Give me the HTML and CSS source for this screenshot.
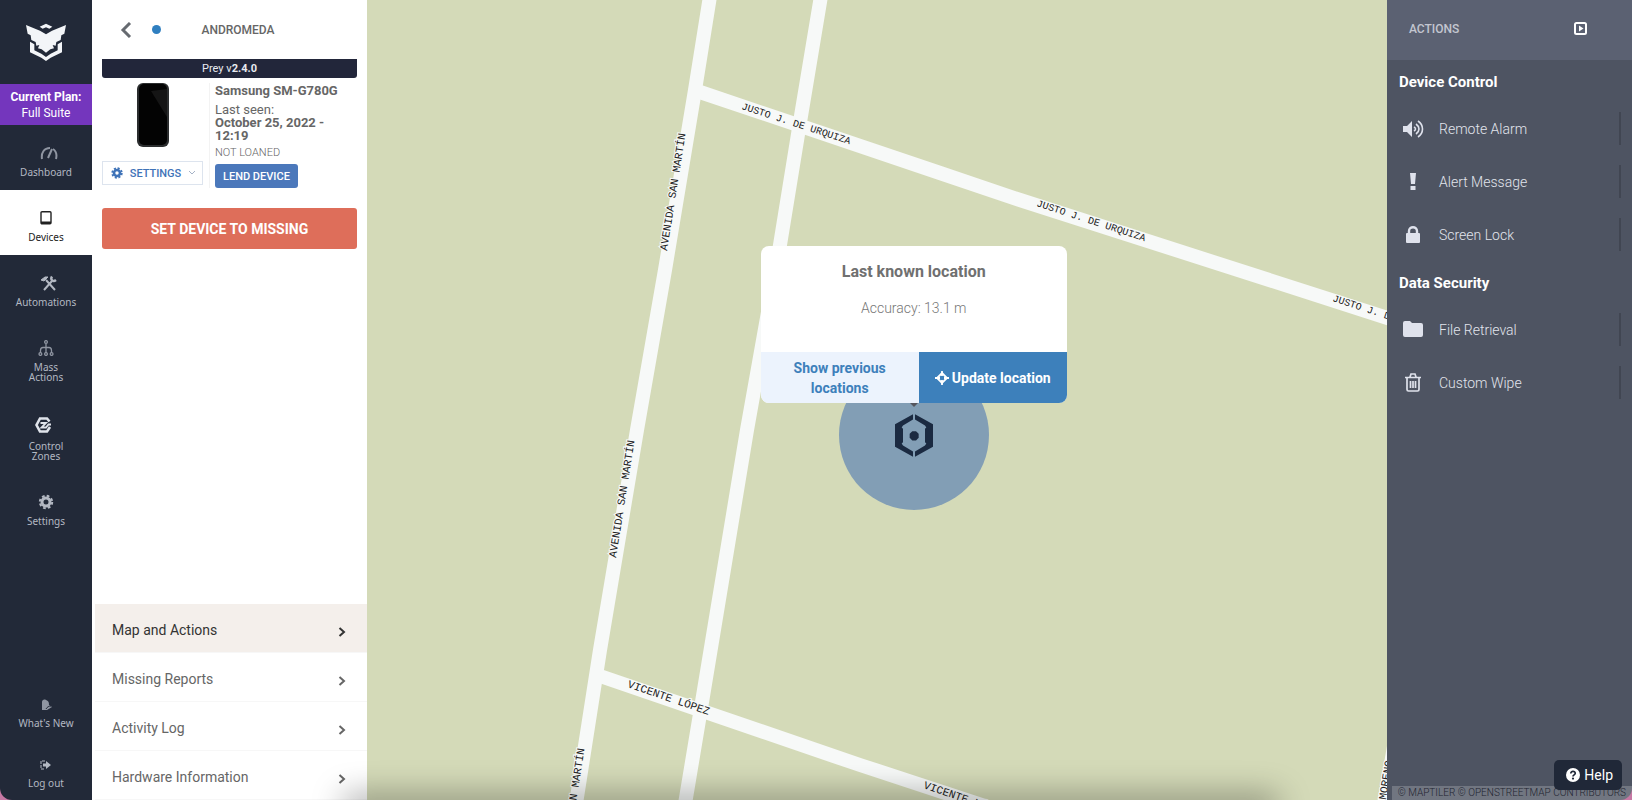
FILE: index.html
```html
<!DOCTYPE html>
<html lang="en">
<head>
  <meta charset="UTF-8">
  <meta name="viewport" content="width=device-width, initial-scale=1">
  <title>Andromeda - Prey</title>
  <link rel="stylesheet" href="styles.css">
</head>
<body>
  <div class="app">

    <!-- Main navigation -->
    <nav class="sidebar">
      <a href="#" class="logo" aria-label="Prey">
        <svg viewBox="0 0 120 114" width="40" height="38" fill="#f3f5f8">
          <path d="M60 2l19 9-9 6-10-4-10 4-9-6z"/>
          <path d="M0 6l42 17 18 11 18-11 42-17-5 26-9 5-2 14-13 6-2 11-9-2 4 10-11 3-13 10-13-10-11-3 4-10-9 2-2-11-13-6-2-14-9-5z"/>
          <path d="M12 56l13 8v18l21 10 14 10 14-10 21-10V64l13-8v32l-34 16-14 10-14-10-34-16z"/>
        </svg>
      </a>
      <div class="plan"><strong>Current Plan:</strong><span>Full Suite</span></div>

      <a href="#" class="item">
        <svg class="shift" viewBox="0 0 18 16" width="18" height="16" fill="none" stroke="#8f95a1" stroke-width="2">
          <path d="M2 14C1 8 4 3 10 3M13 4c3 2 4 6 3 10"/>
          <path d="M8 13l4-9"/>
        </svg>
        <span>Dashboard</span>
      </a>
      <a href="#" class="item active">
        <svg viewBox="0 0 16 16" width="16" height="16" fill="none" stroke="currentColor" stroke-width="1.4">
          <rect x="3" y="1.700" width="10" height="12" rx="1"/>
          <path d="M3 12.500h10" stroke-width="2"/>
        </svg>
        <span>Devices</span>
      </a>
      <a href="#" class="item">
        <svg class="shift" viewBox="0 0 18 16" width="18" height="16" fill="none" stroke="currentColor" stroke-width="2">
          <path d="M4 15l8-9M6 5l9 10"/>
          <path d="M1 5l4-3h3L4 6z" fill="currentColor" stroke-width="1"/>
          <path d="M12 1.500c-2 3 1 6 4 3.500" stroke-width="2.400"/>
        </svg>
        <span>Automations</span>
      </a>
      <a href="#" class="item">
        <svg viewBox="0 0 16 16" width="16" height="16" fill="none" stroke="#8f95a1" stroke-width="1.300">
          <circle cx="8" cy="2" r="1.400"/>
          <path d="M8 3.500V13M2.500 13v-2.500c0-2 1-3 2.500-3h6c1.500 0 2.500 1 2.500 3V13"/>
          <circle cx="2.400" cy="14" r="1.400"/><circle cx="8" cy="14" r="1.400"/><circle cx="13.600" cy="14" r="1.400"/>
        </svg>
        <span>Mass<br>Actions</span>
      </a>
      <a href="#" class="item">
        <svg class="zones" viewBox="0 0 20 20" width="20" height="20" fill="none" stroke="#dfe3ea" stroke-width="2.600">
          <path d="M15.500 6.500L13 3.500H6L2.500 10 6 16.500h7l3-4.500"/>
          <path d="M6.500 8h5.500L7.500 12.500H12l2.500-3H17" stroke-width="1.800"/>
        </svg>
        <span>Control<br>Zones</span>
      </a>
      <a href="#" class="item">
        <svg viewBox="0 0 16 16" width="16" height="16" fill="none" stroke="currentColor">
          <circle cx="8" cy="8" r="4" stroke-width="3"/>
          <circle cx="8" cy="8" r="6.200" stroke-width="2" stroke-dasharray="2.700 2.170"/>
        </svg>
        <span>Settings</span>
      </a>

      <div class="sidebar-bottom">
        <a href="#" class="item">
          <svg viewBox="0 0 16 16" width="16" height="16" fill="#8f95a1">
            <path d="M4 13V5c0-2 2-3 4-2 3 1 3 3 3 5l3 2-5 3z"/>
            <path d="M8 12c1-2 3-3 5-3" fill="none" stroke="#222938"/>
          </svg>
          <span>What's New</span>
        </a>
        <a href="#" class="item">
          <svg viewBox="0 0 16 16" width="16" height="16" fill="currentColor">
            <path d="M7 4H3v8h4" fill="none" stroke="currentColor" stroke-dasharray="3 1"/>
            <path d="M5 6.500h3V4l5 4-5 4V9.500H5z"/>
          </svg>
          <span>Log out</span>
        </a>
      </div>
    </nav>

    <!-- Selected device -->
    <section class="device">
      <header class="device-header">
        <button type="button" class="back" aria-label="Back">
          <svg viewBox="0 0 12 16" width="12" height="16" fill="none" stroke="#666a70" stroke-width="3"><path d="M10 1L3 8l7 7"/></svg>
        </button>
        <span class="status"></span>
        <h1>ANDROMEDA</h1>
      </header>

      <div class="device-body">
        <div class="version">Prey v<strong>2.4.0</strong></div>
        <div class="summary">
          <div class="picture">
            <svg viewBox="0 0 32 64" width="32" height="64">
              <rect x="0" y="0" width="32" height="64" rx="6" fill="#2b2d2e"/>
              <rect x="2" y="1" width="28" height="61" rx="5" fill="#030303"/>
              <path d="M30 6v28L14 8z" fill="#151515"/>
            </svg>
            <button type="button" class="settings">
              <svg viewBox="0 0 16 16" width="12" height="12" fill="none" stroke="currentColor">
                <circle cx="8" cy="8" r="4" stroke-width="3.400"/>
                <circle cx="8" cy="8" r="6.400" stroke-width="2.400" stroke-dasharray="2.800 2.230"/>
              </svg>
              <span>SETTINGS</span>
              <svg viewBox="0 0 8 6" width="8" height="6" fill="none" stroke="#a5b2c6"><path d="M1 1l3 3 3-3"/></svg>
            </button>
          </div>
          <div class="info">
            <h2>Samsung SM-G780G</h2>
            <p>Last seen:<br><strong>October 25, 2022 - 12:19</strong></p>
            <p class="loan">NOT LOANED</p>
            <button type="button" class="lend">LEND DEVICE</button>
          </div>
        </div>
        <button type="button" class="missing">SET DEVICE TO MISSING</button>
      </div>

      <ul class="menu">
        <li><a href="#" class="current">Map and Actions <svg viewBox="0 0 8 12" width="8" height="12"><path d="M1.500 2L6 6l-4.500 4"/></svg></a></li>
        <li><a href="#">Missing Reports <svg viewBox="0 0 8 12" width="8" height="12"><path d="M1.500 2L6 6l-4.500 4"/></svg></a></li>
        <li><a href="#">Activity Log <svg viewBox="0 0 8 12" width="8" height="12"><path d="M1.500 2L6 6l-4.500 4"/></svg></a></li>
        <li><a href="#">Hardware Information <svg viewBox="0 0 8 12" width="8" height="12"><path d="M1.500 2L6 6l-4.500 4"/></svg></a></li>
      </ul>
    </section>

    <!-- Map -->
    <main class="map">
      <svg class="streets" viewBox="367 0 1020 800" preserveAspectRatio="xMidYMid slice">
        <g class="roads">
          <path d="M711-10L695 90 665 270 637 430 600 650 575 810"/>
          <path d="M822-10L800 122 780 245 747 430 704 690 684 810"/>
          <path d="M697 91L940 173 1020 200 1400 322"/>
          <path d="M600 676L860 765 1000 811"/>
          <path d="M1396 735L1383 810"/>
        </g>
        <g class="names">
          <text transform="translate(741 109) rotate(18)">JUSTO J. DE URQUIZA</text>
          <text transform="translate(1036 206) rotate(18)">JUSTO J. DE URQUIZA</text>
          <text transform="translate(1332 301) rotate(18)">JUSTO J. DE URQUIZA</text>
          <text class="long" transform="translate(667 251) rotate(-81)">AVENIDA SAN MARTÍN</text>
          <text class="long" transform="translate(616 558) rotate(-81)">AVENIDA SAN MARTÍN</text>
          <text class="long" transform="translate(566 866) rotate(-81)">AVENIDA SAN MARTÍN</text>
          <text class="long" transform="translate(627 687) rotate(19)">VICENTE LÓPEZ</text>
          <text class="long" transform="translate(923 788) rotate(19)">VICENTE LÓPEZ</text>
          <text class="long" transform="translate(1386 800) rotate(-81)">MORENO</text>
        </g>
      </svg>

      <div class="location">
        <svg class="marker" viewBox="0 0 114 128" width="38" height="43" fill="#1b2a41">
          <path d="M54 0L0 30v68l54 30v-16l-30-18-4-6 4-4V44l-4-4 4-6 30-18z"/>
          <path d="M60 0l54 30v68l-54 30v-16l30-18 4-6-4-4V44l4-4-4-6-30-18z"/>
          <path d="M52 51h11l8 8v12l-8 8H52l-8-8V59z"/>
        </svg>
        <div class="popup">
          <h2>Last known location</h2>
          <p>Accuracy: 13.1 m</p>
          <div class="popup-buttons">
            <button type="button" class="previous">Show previous locations</button>
            <button type="button" class="update">
              <svg viewBox="0 0 14 14" width="14" height="14" fill="none" stroke="currentColor" stroke-width="1.800">
                <path d="M7 2l5 5-5 5-5-5z"/>
                <path d="M7 0v5M7 9v5M0 7h5M9 7h5"/>
              </svg>
              Update location
            </button>
          </div>
        </div>
      </div>
    </main>

    <!-- Actions -->
    <aside class="actions">
      <header class="actions-header">
        <h2>ACTIONS</h2>
        <button type="button" aria-label="Hide actions">
          <svg viewBox="0 0 13 13" width="13" height="13" fill="none" stroke="#fff" stroke-width="2">
            <rect x="1" y="1" width="11" height="11" rx="1.500"/>
            <path d="M5 3.500l4.500 3L5 9.500z" fill="#fff" stroke="none"/>
          </svg>
        </button>
      </header>
      <h3>Device Control</h3>
      <ul>
        <li><button type="button">
          <svg viewBox="0 0 22 20" width="22" height="20" fill="#dfe2ec">
            <path d="M1 7h4l5-5v16l-5-5H1z"/>
            <path d="M12 8c2 1 2 3 0 4M14 5c4 3 4 7 0 10M16 2c6 4 6 12 0 16" fill="none" stroke="#dfe2ec" stroke-width="1.600"/>
          </svg>
          Remote Alarm</button></li>
        <li><button type="button">
          <svg viewBox="0 0 22 20" width="22" height="20" fill="#dfe2ec"><path d="M8 1h6l-1 11H9zM8.500 14h5v4h-5z"/></svg>
          Alert Message</button></li>
        <li><button type="button">
          <svg viewBox="0 0 22 20" width="22" height="20" fill="#dfe2ec">
            <rect x="4" y="8" width="14" height="10" rx="1"/>
            <path d="M7 9V6c0-5 8-5 8 0v3" fill="none" stroke="#dfe2ec" stroke-width="2.400"/>
          </svg>
          Screen Lock</button></li>
      </ul>
      <h3>Data Security</h3>
      <ul>
        <li><button type="button">
          <svg viewBox="0 0 22 20" width="22" height="20" fill="#dfe2ec"><path d="M3 1h5l2 2h9q2 0 2 2v10q0 2-2 2H3q-2 0-2-2V3q0-2 2-2z"/></svg>
          File Retrieval</button></li>
        <li><button type="button">
          <svg viewBox="0 0 22 20" width="22" height="20" fill="none" stroke="#dfe2ec" stroke-width="1.700">
            <path d="M3 4.500h16M5 5v11.500q0 1.500 1.500 1.500h9q1.500 0 1.500-1.500V5M8 4l1-3h4l1 3M8.500 8v7M11 8v7M13.500 8v7"/>
          </svg>
          Custom Wipe</button></li>
      </ul>
    </aside>

    <div class="dock-shadow"></div>
    <div class="attribution"><a href="#">© MAPTILER</a> <a href="#">© OPENSTREETMAP CONTRIBUTORS</a></div>
    <button type="button" class="help">
      <svg viewBox="0 0 14 14" width="14" height="14">
        <circle cx="7" cy="7" r="7" fill="#fff"/>
        <path d="M4.800 5.500c0-3 4.600-2.600 4.400 0C9.100 7 7 6.800 7 8.500" fill="none" stroke="#202838" stroke-width="1.700"/>
        <circle cx="7" cy="10.600" r="1.100" fill="#202838"/>
      </svg>
      Help
    </button>
  </div>
</body>
</html>
```
FILE: styles.css
```css
* {
  box-sizing: border-box;
}

body {
  margin: 0;
  background: #c678a4;
  font-family: Roboto, "Liberation Sans", sans-serif;
  color: #666;
}

h1, h2, h3, p, ul {
  margin: 0;
  padding: 0;
}

ul {
  list-style: none;
}

a {
  color: inherit;
  text-decoration: none;
}

button {
  font-family: inherit;
  border: 0;
  padding: 0;
  background: none;
  cursor: pointer;
}

.app {
  position: relative;
  display: flex;
  min-height: 100vh;
  border-radius: 0 0 12px 12px;
  overflow: hidden;
}

/* Main navigation */
.sidebar {
  width: 92px;
  flex: none;
  display: flex;
  flex-direction: column;
  background: #222938;
}

.logo {
  height: 84px;
  display: flex;
  align-items: center;
  justify-content: center;
}

.plan {
  height: 41px;
  display: flex;
  flex-direction: column;
  justify-content: center;
  background: #7436bd;
  color: #fff;
  font-size: 12px;
  line-height: 16px;
  text-align: center;
}

.item {
  display: flex;
  flex-direction: column;
  align-items: center;
  gap: 6px;
  padding: 20px 0 13px;
  color: #b3b8c2;
  font-family: "Noto Sans", sans-serif;
  font-size: 10px;
  line-height: 10px;
  text-align: center;
}

.item.active {
  background: #fff;
  color: #222;
}

.shift {
  margin-left: 5px;
}

.zones {
  margin-right: 4px;
}

.sidebar-bottom {
  margin-top: auto;
}

.sidebar-bottom .item {
  gap: 5px;
  padding: 17px 0 12px;
}

/* Selected device */
.device {
  width: 275px;
  flex: none;
  display: flex;
  flex-direction: column;
  background: #fff;
}

.device-header {
  display: flex;
  align-items: center;
  height: 59px;
  padding: 0 52px 0 28px;
}

.device-header h1 {
  flex: 1;
  font-size: 12px;
  font-weight: 500;
  text-align: center;
}

.back {
  display: flex;
}

.status {
  width: 9px;
  height: 9px;
  margin-left: 20px;
  border-radius: 50%;
  background: #2f7fc0;
}

.device-body {
  padding: 0 10px;
}

.version {
  height: 19px;
  border-radius: 0 0 3px 3px;
  background: #22263a;
  color: #e8eaf0;
  font-size: 11px;
  line-height: 19px;
  text-align: center;
}

.summary {
  display: flex;
  gap: 5px;
  margin-top: 5px;
}

.picture {
  width: 108px;
  display: flex;
  flex-direction: column;
  justify-content: space-between;
  padding: 0 6px 3px 0;
  border-right: 1px solid #f3f3f3;
}

.picture > svg {
  align-self: center;
}

.settings {
  display: flex;
  align-items: center;
  justify-content: space-between;
  height: 24px;
  padding: 0 6px 0 8px;
  border: 1px solid #dde4ee;
  color: #3f73b8;
  font-size: 11px;
  font-weight: 500;
}

.info {
  flex: 1;
}

.info h2 {
  font-size: 13px;
  line-height: 16px;
}

.info p {
  margin-top: 4px;
  font-size: 13px;
  line-height: 13px;
}

.info .loan {
  font-size: 11px;
  font-weight: 300;
}

.lend {
  height: 24px;
  margin-top: 5px;
  padding: 0 8px;
  border-radius: 3px;
  background: #4b78bb;
  color: #fff;
  font-size: 11px;
  font-weight: 500;
}

.missing {
  width: 100%;
  height: 41px;
  margin-top: 20px;
  border-radius: 3px;
  background: #de6e5a;
  color: #fff;
  font-size: 14px;
  font-weight: 700;
}

.menu {
  margin-top: auto;
  margin-left: 3px;
}

.menu a {
  display: flex;
  align-items: center;
  justify-content: space-between;
  height: 49px;
  padding: 3px 21px 0 17px;
  border-bottom: 1px solid #f7f7f7;
  font-size: 14px;
}

.menu .current {
  background: #f4efeb;
  color: #333;
}

.menu svg {
  margin-top: 4px;
  fill: none;
  stroke: currentColor;
  stroke-width: 2;
}

/* Map */
.map {
  flex: 1;
  position: relative;
  overflow: hidden;
  background: #d4dab8;
}

.streets {
  position: absolute;
  width: 100%;
  height: 100%;
}

.roads {
  fill: none;
  stroke: #f7f9f8;
  stroke-width: 14px;
}

.names {
  fill: #222;
  stroke: #f7f9f8;
  stroke-width: 2px;
  paint-order: stroke;
  font-family: "Liberation Mono", monospace;
  font-size: 10px;
}

.names .long {
  font-size: 11px;
}

/* Accuracy circle, its centre is the device position */
.location {
  position: absolute;
  left: 53.6%;
  top: 54.4%;
  width: 150px;
  height: 150px;
  margin: -75px 0 0 -75px;
  display: flex;
  align-items: center;
  justify-content: center;
  border-radius: 50%;
  background: #829eb5;
}

.popup {
  position: absolute;
  left: -78px;
  bottom: 107px;
  width: 306px;
  border-radius: 8px;
  background: #fff;
  text-align: center;
}

.popup::after {
  content: "";
  position: absolute;
  left: 149px;
  top: 100%;
  border: 4px solid transparent;
  border-top-color: #55565e;
}

.popup h2 {
  padding-top: 16px;
  font-size: 16px;
  line-height: 20px;
  color: #707070;
}

.popup p {
  margin: 16px 0 34px;
  font-size: 14px;
  line-height: 20px;
  font-weight: 300;
  color: #777;
}

.popup-buttons {
  display: flex;
}

.popup-buttons button {
  height: 51px;
  font-size: 14px;
  line-height: 20px;
  font-weight: 700;
}

.previous {
  width: 158px;
  padding: 0 30px;
  border-radius: 0 0 0 8px;
  background: #ecf3fd;
  color: #3d80bb;
}

.update {
  flex: 1;
  display: flex;
  align-items: center;
  justify-content: center;
  gap: 3px;
  border-radius: 0 0 8px 0;
  background: #3d80bb;
  color: #fff;
}

/* Actions */
.actions {
  width: 245px;
  flex: none;
  background: #4e5462;
  color: #dcdfe8;
}

.actions-header {
  display: flex;
  align-items: center;
  justify-content: space-between;
  height: 60px;
  padding: 0 45px 3px 22px;
  background: #5b6172;
}

.actions-header h2 {
  font-size: 12px;
  font-weight: 500;
  color: #c3c6d0;
}

.actions-header button {
  display: flex;
}

.actions h3 {
  padding: 3px 0 0 12px;
  font-size: 15px;
  line-height: 39px;
  color: #fff;
}

.actions li {
  padding: 10px 11px 10px 15px;
}

.actions li button {
  display: flex;
  align-items: center;
  gap: 15px;
  width: 100%;
  height: 33px;
  border-right: 2px solid #414652;
  color: #e2e5ed;
  font-size: 14px;
  font-weight: 300;
}

/* Overlays */
.dock-shadow {
  position: absolute;
  left: 350px;
  right: 360px;
  bottom: -12px;
  height: 10px;
  box-shadow: 0 0 32px 6px rgba(0, 0, 0, 0.4);
  pointer-events: none;
}

.attribution {
  position: absolute;
  right: 0;
  bottom: 0;
  height: 14px;
  padding: 0 6px;
  background: rgba(255, 255, 255, 0.2);
  color: #1f2430;
  font-size: 10px;
  font-weight: 300;
  line-height: 14px;
}

.help {
  position: absolute;
  right: 10px;
  bottom: 10px;
  display: flex;
  align-items: center;
  gap: 4px;
  height: 30px;
  padding: 0 9px 0 12px;
  border-radius: 5px;
  background: #202838;
  color: #fff;
  font-size: 14px;
}
```
